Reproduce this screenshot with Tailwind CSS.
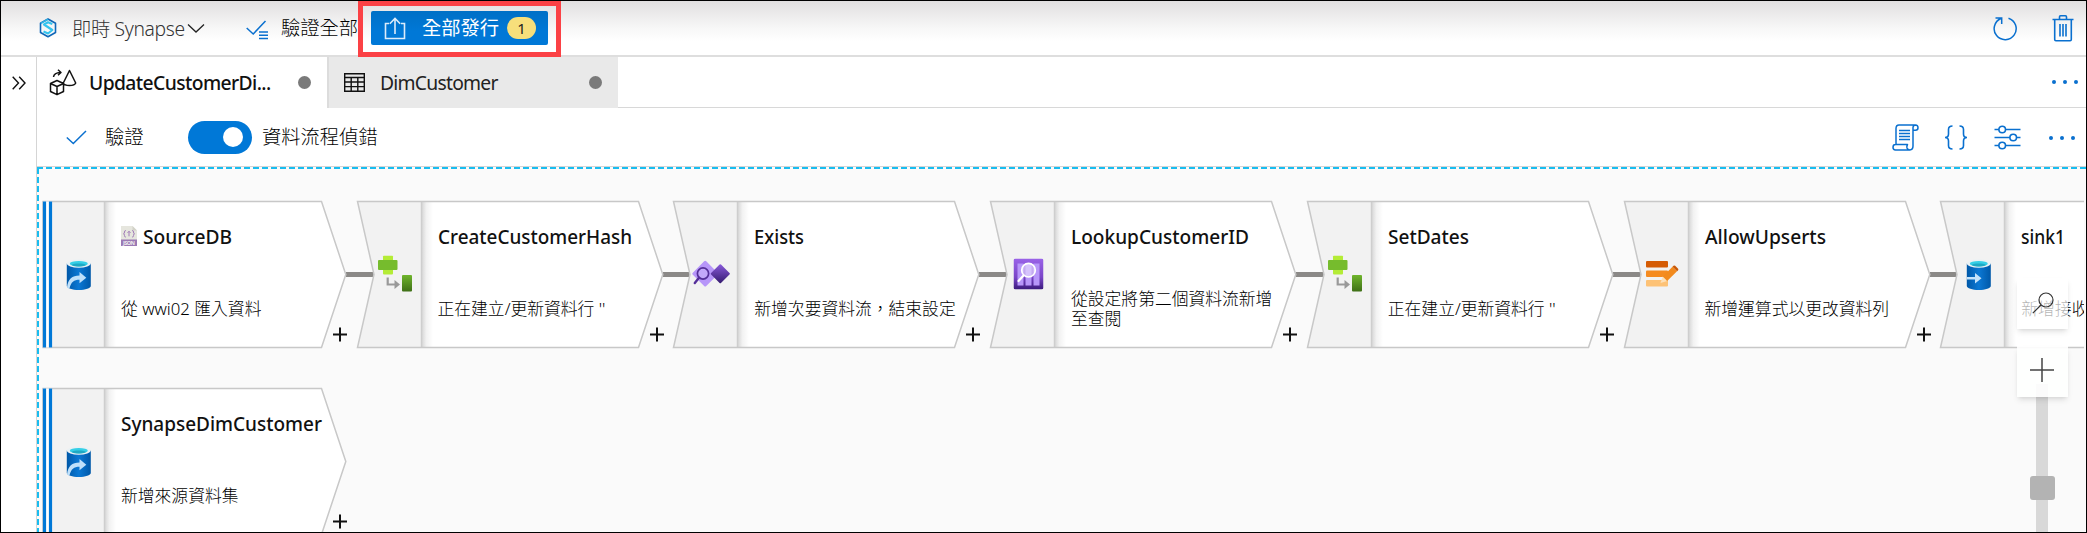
<!DOCTYPE html>
<html lang="zh-Hant">
<head>
<meta charset="utf-8">
<title>Synapse</title>
<script src="https://cdn.jsdelivr.net/npm/@tailwindcss/browser@4"></script>
</head>
<body class="overflow-hidden font-['Noto_Sans','Noto_Sans_CJK_TC',sans-serif] text-[#111]">
<svg class="absolute size-0">
  <defs>
    <linearGradient id="blue"><stop offset="0" stop-color="#0058a8"/><stop offset=".5" stop-color="#0b78d4"/><stop offset="1" stop-color="#0058a8"/></linearGradient>
    <linearGradient id="green" x2="0" y2="1"><stop offset="0" stop-color="#6fb52c"/><stop offset="1" stop-color="#3f6f17"/></linearGradient>
    <linearGradient id="violet" x1="0" y1="0" x2="1" y2="1"><stop offset="0" stop-color="#8a5bdc"/><stop offset="1" stop-color="#341a6e"/></linearGradient>
    <linearGradient id="purple" x2="0" y2="1"><stop offset="0" stop-color="#9a63e8"/><stop offset=".6" stop-color="#7a45c8"/><stop offset="1" stop-color="#3b1b7d"/></linearGradient>
    <linearGradient id="fold"><stop offset="0" stop-color="#d2d2d2"/><stop offset=".45" stop-color="#f2f2f2"/><stop offset="1" stop-color="#fff"/></linearGradient>
    <symbol id="cylinder" viewBox="0 0 26 32">
      <path d="M.8 4.500V27c0 2.200 5.500 4 12 4s12-1.800 12-4V4.500z" fill="url(#blue)"/>
      <ellipse cx="12.800" cy="4.600" rx="12" ry="4.100" fill="#eaf1f4"/>
      <ellipse cx="12.800" cy="4.700" rx="9" ry="2.700" fill="#35cfe6"/>
      <path d="M5.500 5.900c3-1.800 11.600-1.800 14.600 0-3 2-11.600 2-14.600 0z" fill="#1fa9c4"/>
    </symbol>
    <symbol id="source" viewBox="0 0 26 32">
      <use href="#cylinder" width="26" height="32"/>
      <path d="M1 28.500C2 20 6 16.500 13.500 16.500V13l6.800 5.700-6.800 5.600v-3.500C8 20.800 5 23 3.500 29.600z" fill="#bfe0fa"/>
    </symbol>
    <symbol id="sink" viewBox="0 0 26 32">
      <use href="#cylinder" width="26" height="32"/>
      <path d="M.8 18H9v-4l6.500 5.200L9 24.400v-4H.8z" fill="#c4e2fa"/>
    </symbol>
    <symbol id="derive" viewBox="0 0 34 37">
      <rect x="5" width="10" height="19" rx="1" fill="#b4ec36"/>
      <rect y="4.500" width="19.500" height="10" rx="1" fill="#76bc2d"/>
      <path d="M9.700 22v7h8" fill="none" stroke="#999" stroke-width="2.200"/>
      <path d="M16.500 24.500l5.500 4.500-5.500 4.500z" fill="#999"/>
      <rect x="24" y="19.500" width="10" height="16.500" rx="1" fill="url(#green)"/>
    </symbol>
    <symbol id="exists" viewBox="0 0 38 28">
      <rect x="3.700" y="4.200" width="19" height="19" rx="1.500" transform="rotate(45 13.200 13.700)" fill="#b796f9"/>
      <rect x="21.300" y="6.700" width="14" height="14" rx="1" transform="rotate(45 28.300 13.700)" fill="url(#violet)"/>
      <circle cx="11" cy="13.500" r="5.600" fill="#c3a8fa" stroke="#552f99" stroke-width="1.700"/>
      <path d="M7 17.800L2.800 23" stroke="#552f99" stroke-width="2.400" stroke-linecap="round"/>
    </symbol>
    <symbol id="lookup" viewBox="0 0 30 31">
      <rect width="30" height="31" rx="2" fill="url(#purple)"/>
      <path d="M4 5h6v22H4zM12 5h6v22h-6zM20 5h6v22h-6z" fill="#b796f9"/>
      <circle cx="15" cy="11.700" r="6.800" fill="#e6dcff" fill-opacity=".65" stroke="#fff" stroke-width="1.700"/>
      <path d="M10 17l-5 5.500" stroke="#fff" stroke-width="2.200" stroke-linecap="round"/>
    </symbol>
    <symbol id="alter" viewBox="0 0 33 27">
      <rect y=".5" width="22" height="6.500" rx="1" fill="#d55b04"/>
      <rect y="10" width="22" height="6.500" rx="1" fill="#f58b20"/>
      <rect y="19.500" width="22" height="6.500" rx="1" fill="#fdc276"/>
      <path d="M14.500 22.500l2.200-6.500 4.500 4.500z" fill="#fde0b8"/>
      <path d="M16.700 16L26.500 6.200l4.500 4.500-9.800 9.800z" fill="#f28a1d"/>
      <path d="M26.500 6.200l1-1q.8-.6 1.600 0l3 3q.6.800 0 1.500l-1 1z" fill="#c95807"/>
    </symbol>
    <symbol id="json" viewBox="0 0 16 22">
      <path d="M0 1h11.500L16 5.500V21H0z" fill="#e6e6de"/>
      <path d="M11.500 1v4.500H16z" fill="#d2d2c8"/>
      <path d="M4.800 5.500q-1.300 0-1.300 1.500 0 1.800-1 1.800 1 0 1 1.800 0 1.500 1.300 1.500M11.200 5.500q1.300 0 1.300 1.500 0 1.800 1 1.800-1 0-1 1.800 0 1.500-1.300 1.500M8 6.300v5M6.500 7.800L8 6.300l1.500 1.500" fill="none" stroke="#a17bb8" stroke-width="1"/>
      <rect y="14.500" width="16" height="6.500" fill="#9b7ab5"/>
      <text x="8" y="20" font-size="5.500" font-weight="700" fill="#eee" text-anchor="middle" textLength="12">JSON</text>
    </symbol>
  </defs>
</svg>

<div class="relative flex h-[533px] w-[2087px] flex-col overflow-hidden border border-black bg-white">
  <!-- top command bar -->
  <header class="flex h-[56px] shrink-0 items-start border-b-2 border-[#dedede] bg-linear-to-b from-[#e1dfe0] via-[#f7f7f7] via-50% to-white to-75% pt-[7px] text-[19.300px]">
    <div class="flex h-10 w-full items-center">
      <svg class="ml-[38px] h-5 w-[18px]" viewBox="0 0 18 20" fill="none">
        <path d="M9 1l7.500 4.300v9.200L9 18.800l-7.500-4.300V5.300z" stroke="#0f67b8" stroke-width="1.600" stroke-linejoin="round"/>
        <path d="M1.800 5.400L9 1.300" stroke="#2fb5e6" stroke-width="1.600"/>
        <path d="M13.300 6L9 4.300 5 6.500l8.300 5.500L9 15.500l-4.500-2" stroke="#35c4ee" stroke-width="2.200" stroke-linejoin="round"/>
      </svg>
      <span class="ml-[15px] mt-0.5 w-[114px] whitespace-nowrap font-light tracking-[-0.350px] text-[#333]">即時 Synapse</span>
      <svg class="ml-px h-[11px] w-[18px]" viewBox="0 0 18 11"><path d="M1 1.500l8 7.500 8-7.500" fill="none" stroke="#222" stroke-width="1.300"/></svg>
      <svg class="ml-[41px] mt-1 h-5 w-[23px]" viewBox="0 0 23 20" fill="none" stroke="#0a70cf">
        <path d="M.7 8l6.500 6L19.500 1" stroke-width="1.500"/>
        <path d="M13 12h9M13 15.200h9M13 18.500h9" stroke-width="1.500"/>
      </svg>
      <span class="ml-[12px] mt-px w-[78px] whitespace-nowrap font-light text-black">驗證全部</span>
      <div class="ml-[12px] flex h-[34px] w-[177px] items-center rounded-[2px] bg-[#0078d7] bg-linear-to-b from-[#0070c6] to-[#0078d7] to-60% text-white">
        <svg class="ml-[13px] h-[23px] w-[22px]" viewBox="0 0 22 23" fill="none" stroke="#dcecfa" stroke-width="1.600"><path d="M5 6.500H1.500v15h19v-15H17M11 17V1.500M5.800 6.800L11 1.500l5.200 5.300"/></svg>
        <span class="ml-[16px] mt-px w-[78px] whitespace-nowrap">全部發行</span>
        <span class="ml-[7px] flex h-[22px] w-[29px] items-center justify-center rounded-full bg-[#f7df7b] text-[15px] text-[#222]">1</span>
      </div>
      <svg class="ml-auto mr-[34px] h-[26px] w-[26px]" viewBox="0 0 26 26" fill="none" stroke="#0a70cf" stroke-width="1.500"><path d="M16.500 3.200A11 11 0 1 1 9 3.500M3.500 3h6.200v6"/></svg>
      <svg class="mr-[12px] h-7 w-[22px]" viewBox="0 0 22 28" fill="none" stroke="#0a70cf" stroke-width="1.600"><path d="M.5 5.500h21M2.700 5.500v20q0 1.200 1.200 1.200h14.200q1.200 0 1.200-1.200v-20M7.500 5.500V3q0-1.200 1-1.200h5q1 0 1 1.200v2.500M8 10v12.500M11 10v12.500M14 10v12.500"/></svg>
    </div>
  </header>

  <div class="flex min-h-0 flex-1">
    <aside class="flex w-[36px] shrink-0 justify-center border-r border-[#d5d5d5] pt-[19px]">
      <svg class="h-[14px] w-[14px]" viewBox="0 0 14 14" fill="none" stroke="#111" stroke-width="1.400"><path d="M.7.8L6.500 7 .7 13.200M7.200.8L13 7l-5.800 6.200"/></svg>
    </aside>
    <main class="flex min-w-0 flex-1 flex-col">
      <!-- document tabs -->
      <nav class="flex h-[51px] shrink-0 text-[19.300px]">
        <div class="flex w-[290px] items-center pl-[12px]">
          <svg class="h-[27px] w-[28px]" viewBox="0 0 28 27" fill="none" stroke="#111" stroke-width="1.500" stroke-linejoin="round">
            <path d="M1.500 14.500L8 11.500l6.500 3v8L8 25.700l-6.500-3.200zM1.500 14.500L8 17.500l6.500-3M8 17.500v8M20.500 1.500L14.300 14q1 2.500 6.200 2.500t6.200-2.500zM4.500 8q.5-4.300 7-4.500M9 .8l3 2.700-3 2.800"/>
          </svg>
          <span class="ml-[12px] mt-0.5 w-[184px] whitespace-nowrap font-medium tracking-[-0.600px]">UpdateCustomerDi...</span>
          <i class="ml-[25px] size-[13px] rounded-full bg-[#7a7a7a]"></i>
        </div>
        <div class="flex w-[291px] items-center border-l-2 border-[#dcdcdc] bg-[#e9e9e9] pl-[15px]">
          <svg class="h-[19px] w-[21px]" viewBox="0 0 21 19" fill="none" stroke="#111" stroke-width="1.400"><path d="M.7.7h19.600v17.600H.7zM.7 4.500h19.600M.7 9h19.600M.7 13.600h19.600M7.200 4.500v13.800M13.800 4.500v13.800"/></svg>
          <span class="ml-[15px] mt-0.5 w-[118px] whitespace-nowrap tracking-[-0.750px] text-[#222]">DimCustomer</span>
          <i class="ml-[91px] size-[13px] rounded-full bg-[#7a7a7a]"></i>
        </div>
        <div class="flex flex-1 items-center justify-end gap-[7px] border-b border-[#d8d8d8] pr-[8px]">
          <i class="size-1 rounded-full bg-[#0a70cf]"></i><i class="size-1 rounded-full bg-[#0a70cf]"></i><i class="size-1 rounded-full bg-[#0a70cf]"></i>
        </div>
      </nav>
      <!-- data flow toolbar -->
      <div class="flex h-[58px] shrink-0 items-center text-[19.300px]">
        <svg class="ml-[29px] h-[15px] w-[21px]" viewBox="0 0 21 15"><path d="M.8 7.500l6.500 6L20 1" fill="none" stroke="#0a70cf" stroke-width="1.500"/></svg>
        <span class="ml-[18px] w-[39px] whitespace-nowrap font-light text-black">驗證</span>
        <div class="ml-[44px] flex h-[33px] w-[64px] items-center justify-end rounded-full bg-[#0078d7] pr-[9px]"><i class="size-5 rounded-full bg-white"></i></div>
        <span class="ml-[10px] whitespace-nowrap font-light text-black">資料流程偵錯</span>
        <div class="ml-auto flex items-center">
          <svg class="h-[27px] w-[27px]" viewBox="0 0 27 27" fill="none" stroke="#0a70cf" stroke-width="1.500" stroke-linejoin="round">
            <path d="M4 20V4.500Q4 1 7 1h16.500q2.500.2 2.500 2.700t-2.500 2.500H21V22q0 3.800-3.200 4H3.500Q1 25.800 1 23.200 1 20.500 3.500 20.500h12q-1 1.700-.5 3.500.6 1.700 2.800 2M21 6.200V3.500Q21.200 1 23.500 1M7 6.500h11M7 9.500h11M7 12.500h11M7 15.500h11"/>
          </svg>
          <svg class="ml-[25px] h-[25px] w-[24px]" viewBox="0 0 24 25" fill="none" stroke="#0a70cf" stroke-width="1.600"><path d="M8.500 1Q4.500 1 4.500 4.500v4.500Q4.500 12.500 1 12.500q3.500 0 3.500 3.500v4.500Q4.500 24 8.500 24M15.500 1q4 0 4 3.500v4.500q0 3.500 3.500 3.500-3.500 0-3.500 3.500v4.500q0 3.500-4 3.500"/></svg>
          <svg class="ml-[26px] h-[25px] w-[27px]" viewBox="0 0 27 25" fill="none" stroke="#0a70cf" stroke-width="1.600"><path d="M.5 4.500H5M11.500 4.500h15M.5 12.500h15.500M22.500 12.500h4M.5 20.500H5M11.500 20.500h15"/><circle cx="8.200" cy="4.500" r="3.300"/><circle cx="19.200" cy="12.500" r="3.300"/><circle cx="8.200" cy="20.500" r="3.300"/></svg>
          <div class="ml-[28px] mr-[11px] mt-0.5 flex gap-[7px]"><i class="size-1 rounded-full bg-[#0a70cf]"></i><i class="size-1 rounded-full bg-[#0a70cf]"></i><i class="size-1 rounded-full bg-[#0a70cf]"></i></div>
        </div>
      </div>
      <!-- graph canvas -->
      <section class="relative min-h-0 flex-1 overflow-hidden border-t border-[#d5d5d5] bg-[#fafafa]">
        <svg class="absolute left-0 top-0 h-[366px] w-[2049px]" fill="none" stroke="#19bdf0" stroke-width="2"><path d="M0 1h2049" stroke-dasharray="6 3"/><path d="M1 1v366" stroke-dasharray="6 3"/></svg>
        <div id="graph" class="absolute left-0 top-0 h-full w-[2047px] overflow-hidden"></div>
        <div class="absolute left-[1999px] top-[217px] h-[150px] w-[12px] bg-[#d8d8d8]"></div>
        <div class="absolute left-[1993px] top-[309px] h-[24px] w-[25px] rounded-[3px] bg-[#b3b3b3]"></div>
        <div class="absolute left-[1980px] top-[111px] flex size-[51px] items-center justify-center bg-white/70 pb-[2px] shadow-md">
          <svg class="h-[22px] w-[22px]" viewBox="0 0 22 22" fill="none" stroke="#333" stroke-width="1.200"><circle cx="14" cy="8" r="7"/><path d="M9 13L.8 21.200"/></svg>
        </div>
        <div class="absolute left-[1980px] top-[179px] flex size-[51px] items-center justify-center bg-white/90 pr-[2px] pb-[4px] shadow-md">
          <svg class="h-[24px] w-[24px]" viewBox="0 0 24 24" stroke="#444" stroke-width="1.500"><path d="M12 0v24M0 12h24"/></svg>
        </div>
      </section>
    </main>
  </div>
  <!-- highlight frame around the publish button -->
  <div class="absolute left-[357px] top-0 h-[56px] w-[203px] border-[5px] border-[#fb4145]"></div>
</div>

<script>
const nodes = [
  {x: 3, y: 33.500, icon: 'source', ix: 26, iy: 58, iw: 26, ih: 32, name: 'SourceDB', nw: 89, text: '從 wwi02 匯入資料', source: true, json: true, link: true},
  {x: 319.500, y: 33.500, icon: 'derive', ix: 21, iy: 54.500, iw: 34, ih: 37, name: 'CreateCustomerHash', nw: 194, text: "正在建立/更新資料行 ''", link: true},
  {x: 636.300, y: 33.500, icon: 'exists', ix: 19, iy: 59, iw: 38, ih: 28, name: 'Exists', nw: 50, text: '新增次要資料流，結束設定', link: true},
  {x: 953, y: 33.500, icon: 'lookup', ix: 23.500, iy: 57.500, iw: 30, ih: 31, name: 'LookupCustomerID', nw: 178, text: '從設定將第二個資料流新增<br>至查閱', link: true},
  {x: 1269.800, y: 33.500, icon: 'derive', ix: 21, iy: 54.500, iw: 34, ih: 37, name: 'SetDates', nw: 81, text: "正在建立/更新資料行 ''", link: true},
  {x: 1586.500, y: 33.500, icon: 'alter', ix: 22, iy: 59.500, iw: 33, ih: 27, name: 'AllowUpserts', nw: 121, text: '新增運算式以更改資料列', link: true},
  {x: 1903.300, y: 33.500, icon: 'sink', ix: 26, iy: 58, iw: 26, ih: 32, name: 'sink1', nw: 44, text: '新增接收'},
  {x: 3, y: 220.500, icon: 'source', ix: 26, iy: 58, iw: 26, ih: 32, name: 'SynapseDimCustomer', nw: 201, text: '新增來源資料集', source: true},
];
document.getElementById('graph').innerHTML = nodes.map(n => `
  <div class="absolute h-[148px] w-[340px]" style="left:${n.x}px;top:${n.y}px">
    <svg class="absolute left-0 top-0 h-[148px] w-[340px] overflow-visible">
      ${n.link ? '<path d="M306 73.500h28" stroke="#8b8987" stroke-width="5"/>' : ''}
      <path d="${n.source ? 'M3 .5H281.500L305.800 73.500 281.500 146.500H3z' : 'M.5.5H281.500L305.800 73.500 281.500 146.500H.5L17 73.500z'}" fill="#fff"/>
      <path d="${n.source ? 'M3 .5H64v146H3z' : 'M.5.5H64v146H.5L17 73.500z'}" fill="#f2f2f2"/>
      <rect x="64" y="1" width="12" height="145" fill="url(#fold)"/>
      <path d="M64.500 1v145" stroke="#cecece" stroke-width="1.500"/>
      <path d="${n.source ? 'M3 .5H281.500L305.800 73.500 281.500 146.500H3z' : 'M.5.5H281.500L305.800 73.500 281.500 146.500H.5L17 73.500z'}" fill="none" stroke="#c8c8c8" stroke-width="1.500"/>
      ${n.source ? '<path d="M3 .5h9v146H3z" fill="#fff"/><path d="M4.500.5v146M10.500.5v146" stroke="#0078d7" stroke-width="3.200"/>' : ''}
      <use href="#${n.icon}" x="${n.ix}" y="${n.iy}" width="${n.iw}" height="${n.ih}"/>
      <path d="M293 133.500h14M300 126.500v14" stroke="#111" stroke-width="2"/>
      ${n.json ? '<use href="#json" x="81" y="24" width="16" height="22"/>' : ''}
      <text x="${n.json ? 103 : 81}" y="42.500" font-size="19.500" font-weight="500" fill="#111" textLength="${n.nw}" lengthAdjust="spacingAndGlyphs">${n.name}</text>
    </svg>
    <div class="absolute left-[81px] top-[88px] flex h-10 items-center whitespace-nowrap text-[16.800px] leading-5 font-light text-black"><p>${n.text}</p></div>
  </div>`).join('');
</script>
</body>
</html>
